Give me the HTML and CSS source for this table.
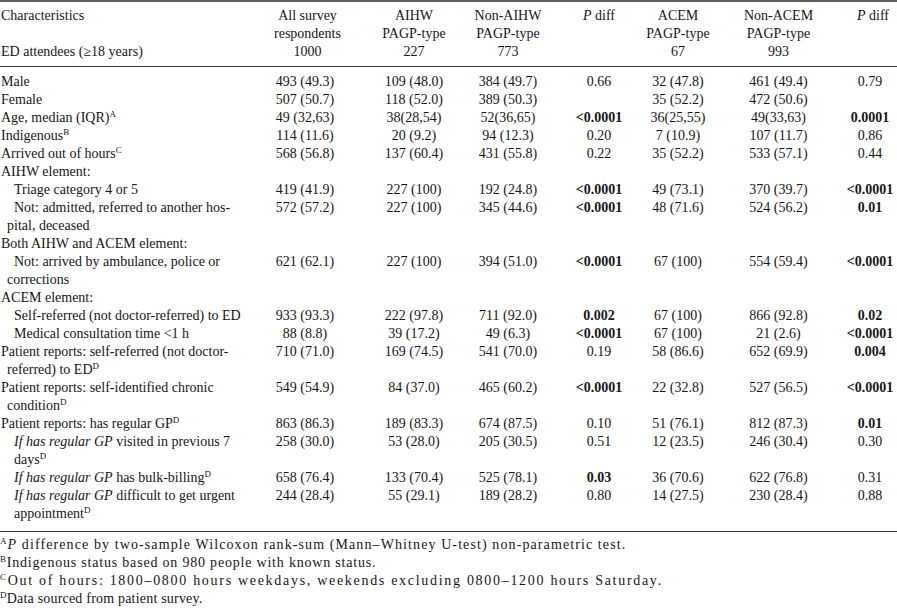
FILE: index.html
```html
<!DOCTYPE html>
<html lang="en">
<head>
<meta charset="utf-8">
<title>Table</title>
<link rel="stylesheet" href="styles.css">
</head>
<body>
<table class="tbl">
<colgroup>
<col class="c1"><col class="c2"><col class="c3"><col class="c4"><col class="c5"><col class="c6"><col class="c7"><col class="c8">
</colgroup>
<thead>
<tr>
<th class="lab">Characteristics<br>&nbsp;<br>ED attendees (<span class="ge">≥</span>18 years)</th>
<th class="h2">All survey<br>respondents<br>1000</th>
<th>AIHW<br>PAGP-type<br>227</th>
<th>Non-AIHW<br>PAGP-type<br>773</th>
<th><i>P</i> diff</th>
<th>ACEM<br>PAGP-type<br>67</th>
<th>Non-ACEM<br>PAGP-type<br>993</th>
<th class="h8"><i>P</i> diff</th>
</tr>
</thead>
<tbody>
<tr><td class="l1">Male</td><td>493 (49.3)</td><td>109 (48.0)</td><td>384 (49.7)</td><td>0.66</td><td>32 (47.8)</td><td>461 (49.4)</td><td>0.79</td></tr>
<tr><td class="l1">Female</td><td>507 (50.7)</td><td>118 (52.0)</td><td>389 (50.3)</td><td></td><td>35 (52.2)</td><td>472 (50.6)</td><td></td></tr>
<tr><td class="l1">Age, median (IQR)<sup>A</sup></td><td>49 (32,63)</td><td>38(28,54)</td><td>52(36,65)</td><td><b>&lt;0.0001</b></td><td>36(25,55)</td><td>49(33,63)</td><td><b>0.0001</b></td></tr>
<tr><td class="l1">Indigenous<sup>B</sup></td><td>114 (11.6)</td><td>20 (9.2)</td><td>94 (12.3)</td><td>0.20</td><td>7 (10.9)</td><td>107 (11.7)</td><td>0.86</td></tr>
<tr><td class="l1">Arrived out of hours<sup>C</sup></td><td>568 (56.8)</td><td>137 (60.4)</td><td>431 (55.8)</td><td>0.22</td><td>35 (52.2)</td><td>533 (57.1)</td><td>0.44</td></tr>
<tr><td class="l1">AIHW element:</td><td></td><td></td><td></td><td></td><td></td><td></td><td></td></tr>
<tr><td class="l2">Triage category 4 or 5</td><td>419 (41.9)</td><td>227 (100)</td><td>192 (24.8)</td><td><b>&lt;0.0001</b></td><td>49 (73.1)</td><td>370 (39.7)</td><td><b>&lt;0.0001</b></td></tr>
<tr><td class="l2">Not: admitted, referred to another hos-<br>pital, deceased</td><td>572 (57.2)</td><td>227 (100)</td><td>345 (44.6)</td><td><b>&lt;0.0001</b></td><td>48 (71.6)</td><td>524 (56.2)</td><td><b>0.01</b></td></tr>
<tr><td class="l1">Both AIHW and ACEM element:</td><td></td><td></td><td></td><td></td><td></td><td></td><td></td></tr>
<tr><td class="l2">Not: arrived by ambulance, police or<br>corrections</td><td>621 (62.1)</td><td>227 (100)</td><td>394 (51.0)</td><td><b>&lt;0.0001</b></td><td>67 (100)</td><td>554 (59.4)</td><td><b>&lt;0.0001</b></td></tr>
<tr><td class="l1">ACEM element:</td><td></td><td></td><td></td><td></td><td></td><td></td><td></td></tr>
<tr><td class="l2">Self-referred (not doctor-referred) to ED</td><td>933 (93.3)</td><td>222 (97.8)</td><td>711 (92.0)</td><td><b>0.002</b></td><td>67 (100)</td><td>866 (92.8)</td><td><b>0.02</b></td></tr>
<tr><td class="l2">Medical consultation time &lt;1 h</td><td>88 (8.8)</td><td>39 (17.2)</td><td>49 (6.3)</td><td><b>&lt;0.0001</b></td><td>67 (100)</td><td>21 (2.6)</td><td><b>&lt;0.0001</b></td></tr>
<tr><td class="l1">Patient reports: self-referred (not doctor-<br>referred) to ED<sup>D</sup></td><td>710 (71.0)</td><td>169 (74.5)</td><td>541 (70.0)</td><td>0.19</td><td>58 (86.6)</td><td>652 (69.9)</td><td><b>0.004</b></td></tr>
<tr><td class="l1">Patient reports: self-identified chronic<br>condition<sup>D</sup></td><td>549 (54.9)</td><td>84 (37.0)</td><td>465 (60.2)</td><td><b>&lt;0.0001</b></td><td>22 (32.8)</td><td>527 (56.5)</td><td><b>&lt;0.0001</b></td></tr>
<tr><td class="l1">Patient reports: has regular GP<sup>D</sup></td><td>863 (86.3)</td><td>189 (83.3)</td><td>674 (87.5)</td><td>0.10</td><td>51 (76.1)</td><td>812 (87.3)</td><td><b>0.01</b></td></tr>
<tr><td class="l3"><i>If has regular GP</i> visited in previous 7<br>days<sup>D</sup></td><td>258 (30.0)</td><td>53 (28.0)</td><td>205 (30.5)</td><td>0.51</td><td>12 (23.5)</td><td>246 (30.4)</td><td>0.30</td></tr>
<tr><td class="l3"><i>If has regular GP</i> has bulk-billing<sup>D</sup></td><td>658 (76.4)</td><td>133 (70.4)</td><td>525 (78.1)</td><td><b>0.03</b></td><td>36 (70.6)</td><td>622 (76.8)</td><td>0.31</td></tr>
<tr class="last"><td class="l3"><i>If has regular GP</i> difficult to get urgent<br>appointment<sup>D</sup></td><td>244 (28.4)</td><td>55 (29.1)</td><td>189 (28.2)</td><td>0.80</td><td>14 (27.5)</td><td>230 (28.4)</td><td>0.88</td></tr>
</tbody>
</table>
<div class="notes">
<p class="n1"><sup>A</sup><i>P</i> difference by two-sample Wilcoxon rank-sum (Mann–Whitney U-test) non-parametric test.</p>
<p class="n2"><sup>B</sup>Indigenous status based on 980 people with known status.</p>
<p class="n3"><sup>C</sup>Out of hours: 1800–0800 hours weekdays, weekends excluding 0800–1200 hours Saturday.</p>
<p class="n4"><sup>D</sup>Data sourced from patient survey.</p>
</div>
</body>
</html>
```

FILE: styles.css
```css
html, body {
  margin: 0;
  padding: 0;
  background: #ffffff;
}
body {
  font-family: "Liberation Serif", "Times New Roman", serif;
  font-size: 14px;
  line-height: 18px;
  color: #161616;
  width: 897px;
  overflow: hidden;
}
.tbl {
  width: 897px;
  table-layout: fixed;
  border-collapse: collapse;
  border-spacing: 0;
}
.c1 { width: 242px; }
.c2 { width: 126px; }
.c3 { width: 92px; }
.c4 { width: 96px; }
.c5 { width: 86px; }
.c6 { width: 72px; }
.c7 { width: 129px; }
.c8 { width: 54px; }

.tbl th, .tbl td {
  padding: 0;
  font-weight: normal;
  text-align: center;
  vertical-align: top;
  white-space: nowrap;
}
.tbl thead tr {
  border-top: 2px solid #5c5c5c;
  border-bottom: 1px solid #3a3a3a;
}
.tbl thead th {
  padding-top: 5px;
  padding-bottom: 5px;
}
.tbl thead th.lab {
  text-align: left;
  padding-left: 1px;
}
.tbl thead th.h2 { padding-left: 5px; }
.tbl thead th.h8 { padding-left: 6px; }
.tbl tbody tr:first-child td { padding-top: 6px; }
.tbl tbody tr.last td { padding-bottom: 8px; }
.tbl tbody tr.last { border-bottom: 1px solid #3a3a3a; }

.tbl td.l1, .tbl td.l2, .tbl td.l3 { text-align: left; }
.l1 { padding-left: 7px !important; text-indent: -6px; }
.l2 { padding-left: 7px !important; text-indent: 7px; }
.l3 { padding-left: 14px !important; }

b { font-weight: bold; }
sup {
  font-size: 9px;
  line-height: 0;
  vertical-align: 5px;
}
.ge { text-decoration: none; }

.notes {
  padding-top: 4px;
}
.notes p {
  margin: 0;
  padding-left: 0;
  white-space: nowrap;
}
.n1 { letter-spacing: 1.1px; }
.n2 { letter-spacing: 0.8px; }
.n3 { letter-spacing: 1.7px; }
.n4 { letter-spacing: 0.2px; }
```
